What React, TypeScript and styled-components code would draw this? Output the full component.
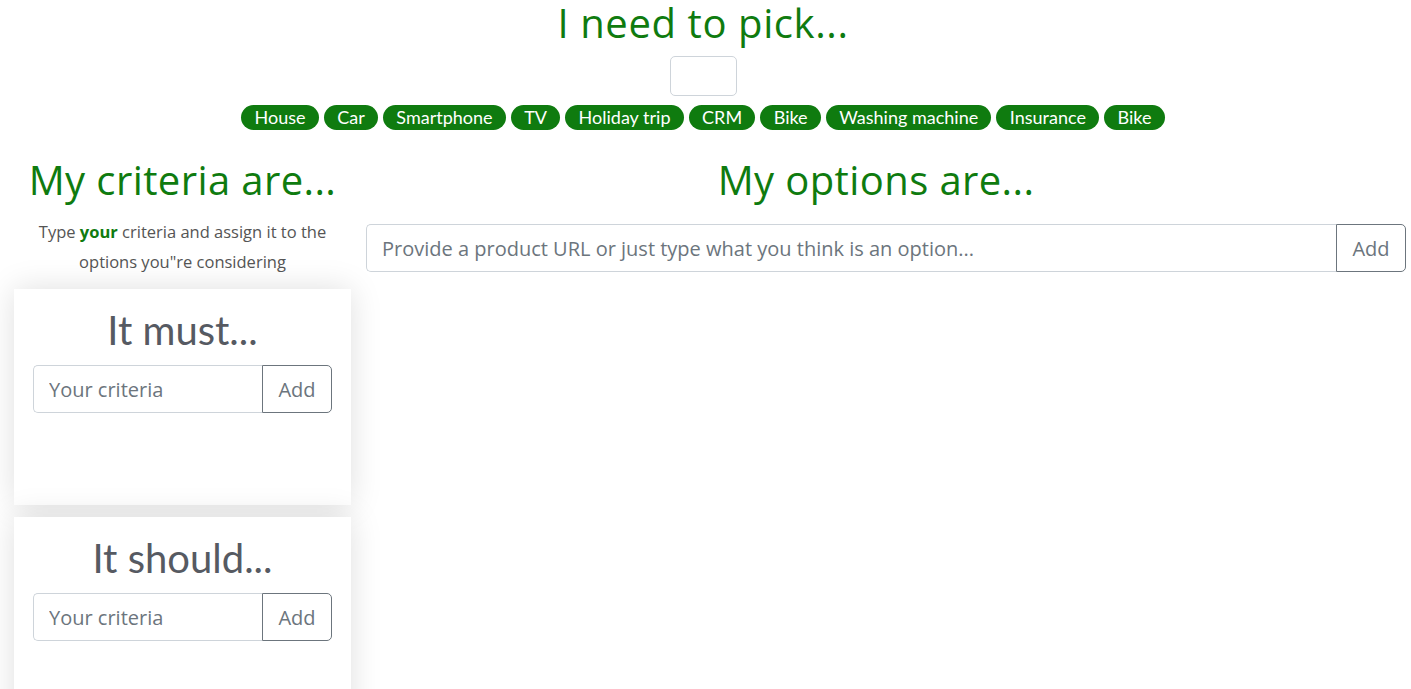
import React from "react";
import styled, { createGlobalStyle } from "styled-components";

const GlobalStyle = createGlobalStyle`
  body {
    margin: 0;
    background: #fff;
    font-family: "Open Sans", "Liberation Sans", sans-serif;
    color: #212529;
  }
  * { box-sizing: border-box; }
`;

const GREEN = "#0f7b0f";

const Page = styled.div`
  width: 1411px;
  height: 689px;
  overflow: hidden;
`;

const Header = styled.header`
  display: flex;
  flex-direction: column;
  align-items: center;
  padding-right: 5px;
`;

const Title = styled.h1`
  margin: 0;
  font-family: "Open Sans", sans-serif;
  font-weight: 400;
  font-size: 40px;
  line-height: 46px;
  letter-spacing: 0.6px;
  color: ${GREEN};
`;

const SmallInput = styled.input`
  margin-top: 10px;
  width: 67px;
  height: 40px;
  border: 1px solid #ced4da;
  border-radius: 5px;
  background: #fff;
`;

const TagRow = styled.div`
  margin-top: 9px;
  display: flex;
  gap: 5px;
  justify-content: center;
`;

const Tag = styled.span`
  height: 25px;
  padding: 0 13.3px;
  border-radius: 13px;
  background: ${GREEN};
  color: #fff;
  font-family: "Lato", sans-serif;
  font-size: 18px;
  line-height: 25px;
`;

const Columns = styled.div`
  display: grid;
  grid-template-columns: 337px 1fr;
  column-gap: 15px;
  padding: 22px 5px 0 14px;
`;

const LeftCol = styled.section`
  display: flex;
  flex-direction: column;
`;

const RightCol = styled.section`
  display: flex;
  flex-direction: column;
`;

const SectionTitle = styled.h2<{ $shift?: number }>`
  margin: 0;
  padding-right: ${(p) => p.$shift ?? 0}px;
  text-align: center;
  font-family: "Open Sans", sans-serif;
  font-weight: 400;
  font-size: 40px;
  line-height: 56px;
  letter-spacing: 0.4px;
  color: ${GREEN};
`;

const Hint = styled.p`
  margin: 9px 0 0;
  text-align: center;
  font-size: 16.5px;
  line-height: 30px;
  color: #555;
  strong { color: ${GREEN}; font-weight: 700; }
`;

const Card = styled.div`
  margin-top: 12px;
  background: #fff;
  box-shadow: 0 0 30px rgba(0, 0, 0, 0.13);
  padding: 17px 19px 0;
  height: 216px;
`;

const CardTitle = styled.h3`
  margin: 0;
  text-align: center;
  font-family: "Lato", sans-serif;
  font-weight: 400;
  font-size: 40px;
  line-height: 48px;
  color: #565a62;
`;

const InputGroup = styled.div<{ $top: number }>`
  display: flex;
  margin-top: ${(p) => p.$top}px;
  height: 48px;
`;

const TextInput = styled.input`
  flex: 1;
  min-width: 0;
  height: 48px;
  padding: 0 15px;
  border: 1px solid #ced4da;
  border-right: none;
  border-radius: 5px 0 0 5px;
  font-family: "Open Sans", sans-serif;
  font-size: 20px;
  color: #495057;
  &::placeholder { color: #6c757d; }
`;

const AddButton = styled.button`
  width: 70px;
  height: 48px;
  border: 1px solid #6c757d;
  border-radius: 0 5px 5px 0;
  background: #fff;
  color: #6c757d;
  font-family: "Open Sans", sans-serif;
  font-size: 20px;
`;

const tags = ["House", "Car", "Smartphone", "TV", "Holiday trip", "CRM", "Bike", "Washing machine", "Insurance", "Bike"];

export default function App() {
  return (
    <Page>
      <GlobalStyle />
      <Header>
        <Title>I need to pick...</Title>
        <SmallInput />
        <TagRow>
          {tags.map((t, i) => (
            <Tag key={i}>{t}</Tag>
          ))}
        </TagRow>
      </Header>
      <Columns>
        <LeftCol>
          <SectionTitle>My criteria are...</SectionTitle>
          <Hint>
            Type <strong>your</strong> criteria and assign it to the options you"re considering
          </Hint>
          <Card>
            <CardTitle>It must...</CardTitle>
            <InputGroup $top={11}>
              <TextInput placeholder="Your criteria" />
              <AddButton>Add</AddButton>
            </InputGroup>
          </Card>
          <Card>
            <CardTitle>It should...</CardTitle>
            <InputGroup $top={11}>
              <TextInput placeholder="Your criteria" />
              <AddButton>Add</AddButton>
            </InputGroup>
          </Card>
        </LeftCol>
        <RightCol>
          <SectionTitle $shift={20}>My options are...</SectionTitle>
          <InputGroup $top={16}>
            <TextInput placeholder="Provide a product URL or just type what you think is an option..." />
            <AddButton>Add</AddButton>
          </InputGroup>
        </RightCol>
      </Columns>
    </Page>
  );
}
